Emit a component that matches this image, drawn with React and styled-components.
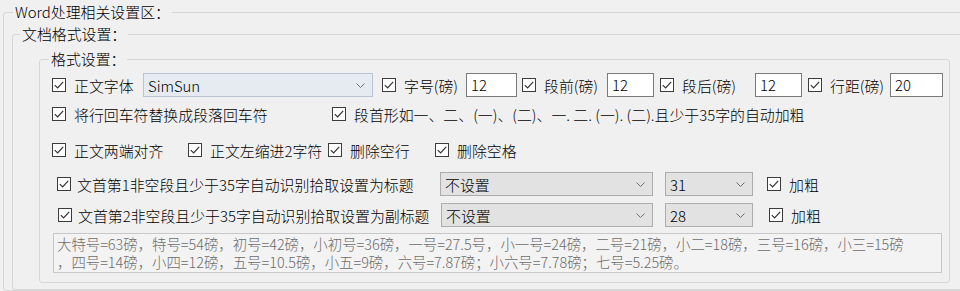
import React from 'react'
import styled, { createGlobalStyle } from 'styled-components'

const GlobalStyle = createGlobalStyle`
  html, body { margin: 0; padding: 0; background: #f0f0f0; overflow: hidden; }
  body {
    font-family: "Noto Sans CJK SC", "Microsoft YaHei", sans-serif;
    font-size: 14.9px;
    font-weight: 300;
    color: #000;
  }
`

const Group = styled.fieldset`
  box-sizing: border-box;
  min-width: 0;
  margin: ${p => p.$margin || '0'};
  padding: ${p => p.$pad};
  width: ${p => p.$w || 'auto'};
  border: 1px solid #d7d7d7;
  border-radius: 3px;
`

const Legend = styled.legend`
  padding: 0 2px;
  margin-left: ${p => p.$ml || '0px'};
  height: 18px;
  line-height: 18px;
`

const Rows = styled.div`
  display: flex;
  flex-direction: column;
`

const Row = styled.div`
  display: flex;
  align-items: center;
  height: ${p => p.$h}px;
  margin-top: ${p => p.$mt || 0}px;
  margin-left: ${p => p.$ml || 0}px;
  white-space: nowrap;
`

const Item = styled.label`
  display: flex;
  align-items: center;
  gap: ${p => p.$gap ?? 8}px;
  width: ${p => (p.$w ? p.$w + 'px' : 'auto')};
  margin-left: ${p => p.$ml || 0}px;
  flex-shrink: 0;
`

const Box = styled.span`
  box-sizing: border-box;
  width: 14px;
  height: 14px;
  border: 1px solid #3c3c3c;
  background: #fff;
  display: flex;
  align-items: center;
  justify-content: center;
  flex-shrink: 0;
`

const Combo = styled.div`
  box-sizing: border-box;
  display: flex;
  align-items: center;
  justify-content: space-between;
  width: ${p => p.$w}px;
  height: 24px;
  margin-left: ${p => p.$ml || 0}px;
  padding: 0 7px 0 4px;
  background: ${p => (p.$active ? '#e6ebf1' : '#e2e2e2')};
  border: 1px solid ${p => (p.$active ? '#b9c5d3' : '#adadad')};
  flex-shrink: 0;
`

const TextBox = styled.div`
  box-sizing: border-box;
  width: ${p => p.$w}px;
  height: 24px;
  padding-left: 4px;
  line-height: 22px;
  background: #fff;
  border: 1px solid #7a7a7a;
  flex-shrink: 0;
`

const Note = styled.div`
  box-sizing: border-box;
  width: 889px;
  height: 40px;
  margin-top: 6px;
  margin-left: 4px;
  padding: 1px 0 0 3px;
  background: #f3f3f3;
  border: 1px solid #c8c8c8;
  color: #6d6d6d;
  font-size: 14.4px;
  line-height: 18px;
  white-space: nowrap;
  overflow: hidden;
`

const Check = ({ label, w, ml, gap }) => (
  <Item $w={w} $ml={ml} $gap={gap}>
    <Box>
      <svg width="12" height="12" viewBox="0 0 12 12">
        <path d="M1.8 6.2 L4.6 9 L10.2 2.8" fill="none" stroke="#333" strokeWidth="1.2" />
      </svg>
    </Box>
    <span>{label}</span>
  </Item>
)

const Select = ({ value, w, ml, active }) => (
  <Combo $w={w} $ml={ml} $active={active}>
    <span>{value}</span>
    <svg width="9" height="5" viewBox="0 0 9 5">
      <path d="M0.5 0.5 L4.5 4.5 L8.5 0.5" fill="none" stroke="#707070" strokeWidth="1" />
    </svg>
  </Combo>
)

export default function App() {
  return (
    <>
      <GlobalStyle />
      <Group $margin="3px 0 0 3px" $pad="4px 0 0 8px" $w="990px">
        <Legend $ml="1px">Word处理相关设置区：</Legend>
        <Group $pad="7px 0 6px 7px">
          <Legend>文档格式设置：</Legend>
          <Group $margin="0 0 0 19px" $pad="5px 0 9px 9px" $w="911px">
            <Legend>格式设置：</Legend>
            <Rows>
              <Row $h={24} $ml={3}>
                <Check label="正文字体" w={91} />
                <Select value="SimSun" w={230} active />
                <Check label="字号(磅)" w={84} ml={9} />
                <TextBox $w={51}>12</TextBox>
                <Check label="段前(磅)" w={85} ml={5} />
                <TextBox $w={47}>12</TextBox>
                <Check label="段后(磅)" w={95} ml={6} />
                <TextBox $w={47}>12</TextBox>
                <Check label="行距(磅)" w={82} ml={6} />
                <TextBox $w={53}>20</TextBox>
              </Row>
              <Row $h={18} $mt={8} $ml={3}>
                <Check label="将行回车符替换成段落回车符" w={280} />
                <Check label="段首形如一、二、(一)、(二)、一. 二. (一). (二).且少于35字的自动加粗" />
              </Row>
              <Row $h={18} $mt={18} $ml={3}>
                <Check label="正文两端对齐" w={136} />
                <Check label="正文左缩进2字符" w={140} />
                <Check label="删除空行" w={107} />
                <Check label="删除空格" />
              </Row>
              <Row $h={24} $mt={13} $ml={8}>
                <Check label="文首第1非空段且少于35字自动识别拾取设置为标题" w={383} gap={6} />
                <Select value="不设置" w={213} />
                <Select value="31" w={88} ml={12} />
                <Check label="加粗" ml={14} />
              </Row>
              <Row $h={24} $mt={7} $ml={9}>
                <Check label="文首第2非空段且少于35字自动识别拾取设置为副标题" w={383} gap={6} />
                <Select value="不设置" w={212} />
                <Select value="28" w={88} ml={12} />
                <Check label="加粗" ml={16} />
              </Row>
            </Rows>
            <Note>
              <div>大特号=63磅，特号=54磅，初号=42磅，小初号=36磅，一号=27.5号，小一号=24磅，二号=21磅，小二=18磅，三号=16磅，小三=15磅</div>
              <div>，四号=14磅，小四=12磅，五号=10.5磅，小五=9磅，六号=7.87磅；小六号=7.78磅；七号=5.25磅。</div>
            </Note>
          </Group>
        </Group>
      </Group>
    </>
  )
}
